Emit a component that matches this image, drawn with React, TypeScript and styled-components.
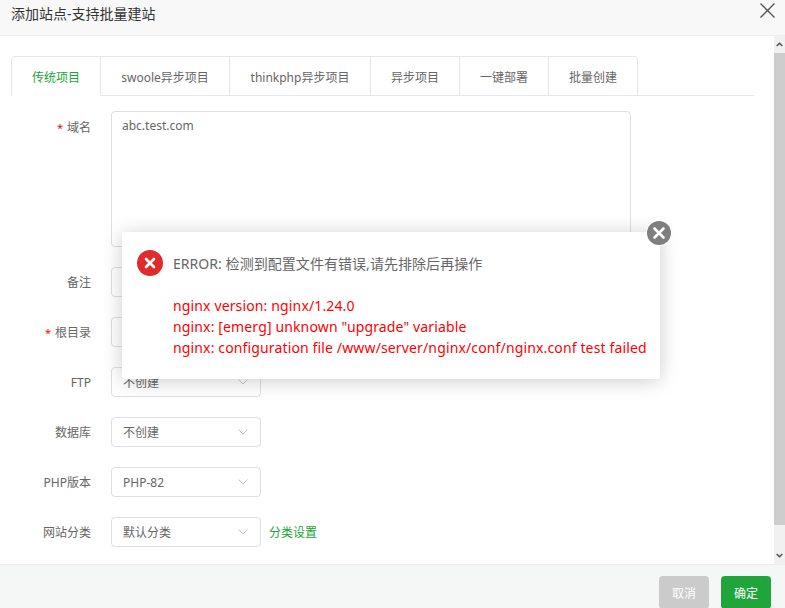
import React, {FC} from 'react';
import styled, {createGlobalStyle} from 'styled-components';

const Global = createGlobalStyle`
  html, body { margin: 0; padding: 0; background: #fff; }
  * { box-sizing: border-box; }
  body { font-family: "Noto Sans", "Noto Sans CJK SC", sans-serif; font-size: 12px; color: #666; }
`;

const Page = styled.div`
  position: relative;
  width: 785px;
  height: 608px;
  display: flex;
  flex-direction: column;
  overflow: hidden;
`;

const TitleBar = styled.div`
  height: 36px;
  flex: none;
  display: flex;
  align-items: flex-start;
  justify-content: space-between;
  background: #f8f8f8;
  border-bottom: 1px solid #eee;
  padding: 0 9px 0 11px;
`;

const Title = styled.div`
  font-size: 14px;
  line-height: 28px;
  color: #333;
`;

const CloseIcon = styled.svg`
  width: 17px;
  height: 17px;
  margin-top: 2px;
`;

const Middle = styled.div`
  flex: 1;
  min-height: 0;
  display: flex;
`;

const Content = styled.div`
  flex: 1;
  min-width: 0;
  padding: 20px 20px 0 11px;
  overflow: hidden;
`;

const Scrollbar = styled.div`
  width: 11px;
  flex: none;
  display: flex;
  flex-direction: column;
  background: #f1f1f1;
`;

const ScrollArrow = styled.div`
  height: 17px;
  flex: none;
  display: flex;
  align-items: center;
  justify-content: center;
`;

const ScrollThumb = styled.div`
  height: 472px;
  flex: none;
  background: #cdcdcd;
`;

const ScrollGap = styled.div`
  flex: 1;
`;

const Tabs = styled.div`
  display: flex;
  height: 40px;
  border-bottom: 1px solid #e4e7ed;
  margin-bottom: 15px;
`;

const Tab = styled.div<{ $active?: boolean; $width: number }>`
  width: ${p => p.$width}px;
  height: 40px;
  flex: none;
  display: flex;
  align-items: center;
  justify-content: center;
  border: 1px solid #e4e7ed;
  border-left: none;
  padding-top: 2px;
  background: #fff;
  color: ${p => (p.$active ? '#20a53a' : '#666')};
  border-bottom-color: ${p => (p.$active ? '#fff' : '#e4e7ed')};
  &:first-child {
    border-left: 1px solid #e4e7ed;
    border-top-left-radius: 4px;
  }
  &:last-child {
    border-top-right-radius: 4px;
  }
`;

const Row = styled.div`
  display: flex;
  align-items: flex-start;
  margin-bottom: 20px;
`;

const Label = styled.label<{ $offset?: number }>`
  width: 80px;
  height: 30px;
  flex: none;
  margin-right: 20px;
  padding-top: ${p => p.$offset ?? 1}px;
  text-align: right;
  line-height: 30px;
  color: #666;
`;

const Star = styled.span`
  color: #ef0808;
  margin-right: 4px;
  font-size: 11px;
`;

const TextArea = styled.div`
  width: 520px;
  height: 136px;
  border: 1px solid #dcdfe6;
  border-radius: 4px;
  padding: 4px 10px;
  line-height: 20px;
  color: #666;
`;

const Input = styled.div`
  width: 400px;
  height: 30px;
  border: 1px solid #dcdfe6;
  border-radius: 4px;
`;

const Select = styled.div`
  width: 150px;
  height: 30px;
  display: flex;
  align-items: center;
  justify-content: space-between;
  border: 1px solid #dcdfe6;
  border-radius: 4px;
  padding: 0 12px 0 11px;
  color: #666;
`;

const Chevron = styled.svg`
  width: 10px;
  height: 6px;
`;

const TextLink = styled.span`
  margin-left: 8px;
  line-height: 30px;
  padding-top: 1px;
  color: #20a53a;
`;

const Footer = styled.div`
  height: 44px;
  flex: none;
  display: flex;
  justify-content: flex-end;
  gap: 12px;
  padding: 11px 14px 0 0;
  background: #f5f6f6;
  border-top: 1px solid #eee;
`;

const Button = styled.div<{ $primary?: boolean }>`
  width: 50px;
  height: 33px;
  border-radius: 4px;
  display: flex;
  align-items: center;
  justify-content: center;
  color: #fff;
  background: ${p => (p.$primary ? '#20a53a' : '#cbcbcb')};
`;

const Popup = styled.div`
  position: absolute;
  left: 122px;
  top: 232px;
  width: 538px;
  height: 147px;
  background: #fff;
  border-radius: 3px;
  box-shadow: 0 2px 20px rgba(0, 0, 0, 0.2);
  padding: 18px 13px 0 15px;
`;

const PopupHead = styled.div`
  display: flex;
  align-items: center;
  gap: 10px;
  height: 26px;
  font-size: 14px;
  letter-spacing: 0.05px;
  color: #666;
`;

const ErrorIcon = styled.svg`
  width: 26px;
  height: 26px;
  flex: none;
`;

const PopupLines = styled.div`
  margin: 19px 0 0 36px;
  font-size: 14px;
  letter-spacing: 0.14px;
  line-height: 21px;
  color: red;
  white-space: nowrap;
`;

const PopupClose = styled.svg`
  position: absolute;
  right: -12px;
  top: -12px;
  width: 26px;
  height: 26px;
`;

const tabs = [
    {name: '传统项目', width: 90},
    {name: 'swoole异步项目', width: 129},
    {name: 'thinkphp异步项目', width: 141},
    {name: '异步项目', width: 89},
    {name: '一键部署', width: 89},
    {name: '批量创建', width: 89},
];

const selects = [
    {label: 'FTP', value: '不创建'},
    {label: '数据库', value: '不创建'},
    {label: 'PHP版本', value: 'PHP-82'},
];

const Arrow: FC = () => (
    <Chevron viewBox="0 0 10 6">
        <path d="M0.5 0.5L5 5L9.5 0.5" fill="none" stroke="#c0c4cc" strokeWidth="1"/>
    </Chevron>
);

const App: FC = () => {
    return (
        <Page>
            <Global/>
            <TitleBar>
                <Title>添加站点-支持批量建站</Title>
                <CloseIcon viewBox="0 0 17 17">
                    <path d="M1.5 1.5L15.5 15.5M15.5 1.5L1.5 15.5" stroke="#555" strokeWidth="1.3" fill="none"/>
                </CloseIcon>
            </TitleBar>
            <Middle>
                <Content>
                    <Tabs>
                        {tabs.map((t, i) => (
                            <Tab key={t.name} $width={t.width} $active={i === 0}>{t.name}</Tab>
                        ))}
                    </Tabs>
                    <Row>
                        <Label $offset={2}><Star>*</Star>域名</Label>
                        <TextArea>abc.test.com</TextArea>
                    </Row>
                    <Row>
                        <Label>备注</Label>
                        <Input/>
                    </Row>
                    <Row>
                        <Label><Star>*</Star>根目录</Label>
                        <Input/>
                    </Row>
                    {selects.map(s => (
                        <Row key={s.label}>
                            <Label>{s.label}</Label>
                            <Select>{s.value}<Arrow/></Select>
                        </Row>
                    ))}
                    <Row>
                        <Label>网站分类</Label>
                        <Select>默认分类<Arrow/></Select>
                        <TextLink>分类设置</TextLink>
                    </Row>
                </Content>
                <Scrollbar>
                    <ScrollArrow>
                        <svg width="7" height="5" viewBox="0 0 7 5">
                            <path d="M0.7 4L3.5 1.2L6.3 4" fill="none" stroke="#505050" strokeWidth="1.5"/>
                        </svg>
                    </ScrollArrow>
                    <ScrollThumb/>
                    <ScrollGap/>
                    <ScrollArrow>
                        <svg width="7" height="5" viewBox="0 0 7 5">
                            <path d="M0.7 1L3.5 3.8L6.3 1" fill="none" stroke="#505050" strokeWidth="1.5"/>
                        </svg>
                    </ScrollArrow>
                </Scrollbar>
            </Middle>
            <Footer>
                <Button>取消</Button>
                <Button $primary>确定</Button>
            </Footer>
            <Popup>
                <PopupHead>
                    <ErrorIcon viewBox="0 0 26 26">
                        <circle cx="13" cy="13" r="13" fill="#e12b2b"/>
                        <path d="M9 9L17 17M17 9L9 17" stroke="#fff" strokeWidth="2.6" strokeLinecap="round"/>
                    </ErrorIcon>
                    <span>ERROR: 检测到配置文件有错误,请先排除后再操作</span>
                </PopupHead>
                <PopupLines>
                    nginx version: nginx/1.24.0<br/>
                    nginx: [emerg] unknown "upgrade" variable<br/>
                    nginx: configuration file /www/server/nginx/conf/nginx.conf test failed
                </PopupLines>
                <PopupClose viewBox="0 0 26 26">
                    <circle cx="13" cy="13" r="13" fill="#fff"/>
                    <circle cx="13" cy="13" r="12" fill="#7f7f7f"/>
                    <path d="M8.5 8.5L17.5 17.5M17.5 8.5L8.5 17.5" stroke="#fff" strokeWidth="2.6" strokeLinecap="round"/>
                </PopupClose>
            </Popup>
        </Page>
    );
};

export default App;
